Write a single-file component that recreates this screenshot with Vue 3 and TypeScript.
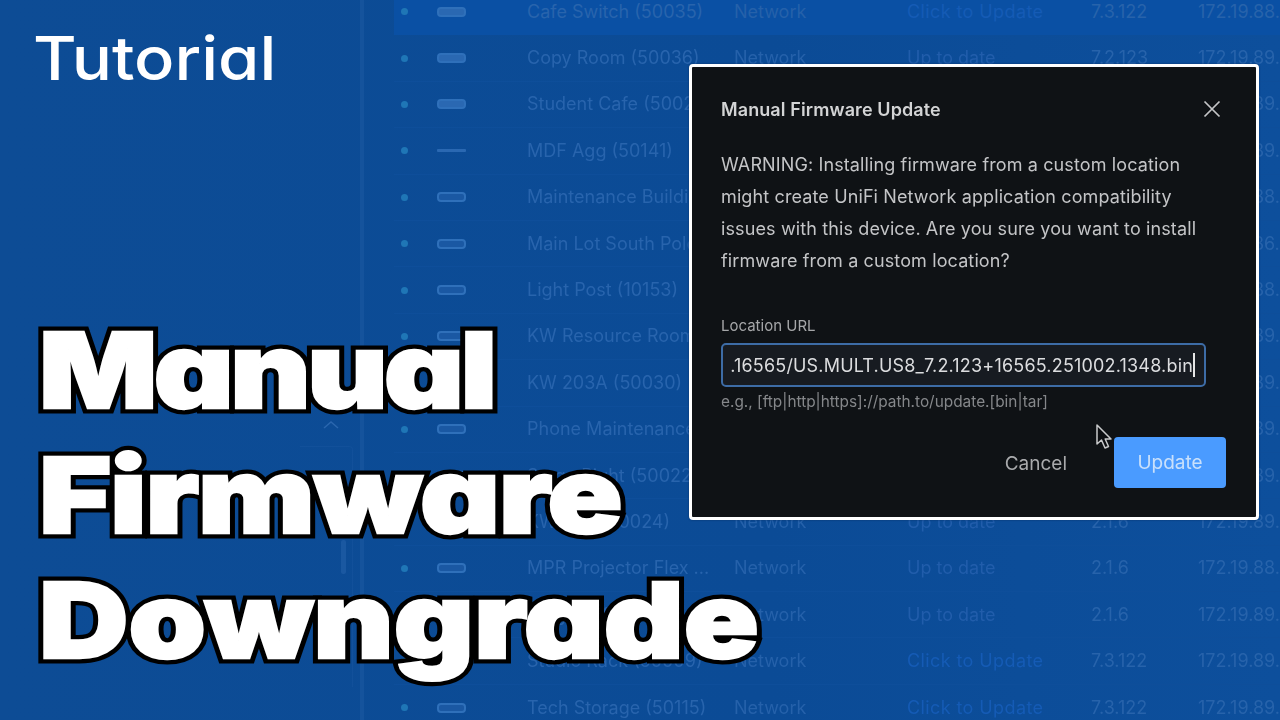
<template>
  <div class="thumb">
    <div class="backdrop">
      <div class="side-rule"></div>
      <div class="side-box"></div>
      <div class="side-bar"></div>
      <svg class="chevron" width="18" height="10" viewBox="0 0 18 10">
        <path d="M2 8 L9 2 L16 8" fill="none" stroke="#2a66ae" stroke-width="1.5" />
      </svg>
      <div class="table">
        <div v-for="(row, i) in rows" :key="i" class="row" :class="{ active: i === 0 }">
          <span class="dot"></span>
          <span class="device" :class="{ thin: row.thin, open: row.open }"></span>
          <span class="name">{{ row.name }}</span>
          <span class="type">Network</span>
          <span class="status" :class="{ link: row.status === 'Click to Update' }">{{ row.status }}</span>
          <span class="ver">{{ row.ver }}</span>
          <span class="ip">{{ row.ip }}</span>
        </div>
      </div>
    </div>

    <div class="overlay">
      <div class="tutorial">Tutorial</div>
      <h1 class="headline">
        <span class="tight" data-t="Manual">Manual</span>
        <span class="snug" data-t="Firmware">Firmware</span>
        <span data-t="Downgrade">Downgrade</span>
      </h1>
    </div>

    <div class="dialog">
      <div class="dialog-head">
        <span class="dialog-title">Manual Firmware Update</span>
        <svg width="20" height="20" viewBox="0 0 20 20">
          <path d="M2.5 2.5 L17.5 17.5 M17.5 2.5 L2.5 17.5" stroke="#c4c5c7" stroke-width="1.7" fill="none" />
        </svg>
      </div>
      <p class="warning">
        WARNING: Installing firmware from a custom location might create UniFi Network application compatibility
        issues with this device. Are you sure you want to install firmware from a custom location?
      </p>
      <label class="field-label">Location URL</label>
      <div class="input">
        <div class="input-clip">
          <span class="input-text">https://fw-download.ubnt.com/data/usw/7.2.123.16565/US.MULT.US8_7.2.123+16565.251002.1348.bin</span>
        </div>
        <span class="caret"></span>
      </div>
      <div class="hint">e.g., [ftp|http|https]://path.to/update.[bin|tar]</div>
      <div class="actions">
        <span class="cancel">Cancel</span>
        <span class="update">Update</span>
      </div>
    </div>

    <svg class="pointer" width="20" height="30" viewBox="0 0 20 30">
      <path d="M2 2 L2 21 L6.5 17 L10 25 L13.5 23.5 L10.2 16 L16 16 Z" fill="#0c0e11" stroke="#c9cacb" stroke-width="1.5" stroke-linejoin="round" />
    </svg>
  </div>
</template>

<script setup lang="ts">
interface Row {
  name: string
  status: string
  ver: string
  ip: string
  thin?: boolean
  open?: boolean
}

const upd = 'Click to Update'
const ok = 'Up to date'

const rows: Row[] = [
  { name: 'Cafe Switch (50035)', status: upd, ver: '7.3.122', ip: '172.19.88.' },
  { name: 'Copy Room (50036)', status: ok, ver: '7.2.123', ip: '172.19.89.' },
  { name: 'Student Cafe (50027)', status: ok, ver: '7.2.123', ip: '172.19.89.' },
  { name: 'MDF Agg (50141)', status: ok, ver: '7.2.123', ip: '172.19.89.', thin: true },
  { name: 'Maintenance Building', status: ok, ver: '7.2.123', ip: '172.19.88.', open: true },
  { name: 'Main Lot South Pole', status: ok, ver: '7.2.123', ip: '172.19.86.7', open: true },
  { name: 'Light Post (10153)', status: ok, ver: '7.2.123', ip: '172.19.88.', open: true },
  { name: 'KW Resource Room', status: ok, ver: '2.1.6', ip: '172.19.89.', open: true },
  { name: 'KW 203A (50030)', status: ok, ver: '2.1.6', ip: '172.19.89.', open: true },
  { name: 'Phone Maintenance', status: ok, ver: '2.1.6', ip: '172.19.89.', open: true },
  { name: 'Stage Right (50022)', status: ok, ver: '2.1.6', ip: '172.19.89.', open: true },
  { name: 'KW 204 (50024)', status: ok, ver: '2.1.6', ip: '172.19.89.', open: true },
  { name: 'MPR Projector Flex ...', status: ok, ver: '2.1.6', ip: '172.19.88.', open: true },
  { name: 'Stage Left (50021)', status: ok, ver: '2.1.6', ip: '172.19.89.', open: true },
  { name: 'Studio Rack (50009)', status: upd, ver: '7.3.122', ip: '172.19.89.', open: true },
  { name: 'Tech Storage (50115)', status: upd, ver: '7.3.122', ip: '172.19.89.', open: true },
]
</script>

<style>
html, body {
  margin: 0;
  background: #0c4b95;
}
</style>

<style scoped>
.thumb {
  position: relative;
  width: 1280px;
  height: 720px;
  overflow: hidden;
  background: linear-gradient(90deg, #0d4c95 0%, #0b4b96 60%, #0d4f9c 100%);
  font-family: Inter, "Liberation Sans", sans-serif;
}

/* faded table behind everything */
.backdrop {
  display: flow-root;
  filter: blur(0.7px);
}
.side-rule {
  position: absolute;
  left: 360px;
  top: 0;
  width: 4px;
  height: 720px;
  background: #15539c;
}
.side-box {
  position: absolute;
  left: 300px;
  top: 446px;
  width: 52px;
  height: 240px;
  border-top: 1px solid #12509a;
  border-right: 1px solid #12509a;
  border-radius: 0 4px 0 0;
}
.side-bar {
  position: absolute;
  left: 341px;
  top: 540px;
  width: 5px;
  height: 34px;
  border-radius: 2px;
  background: #1a58a1;
}
.chevron {
  position: absolute;
  left: 322px;
  top: 420px;
}
.table {
  display: flex;
  flex-direction: column;
  margin-top: -11px;
  margin-left: 394px;
}
.row {
  display: grid;
  grid-template-columns: 43px 90px 207px 173px 184px 107px 1fr;
  align-items: center;
  height: 46.4px;
  box-sizing: border-box;
  border-bottom: 1px solid #0e4e9a;
  font-size: 18px;
  line-height: 24px;
  color: #2864ad;
  white-space: nowrap;
  overflow: hidden;
}
.row.active {
  background: #0a50a4;
  border-bottom-color: transparent;
}
.dot {
  width: 7px;
  height: 7px;
  margin-left: 7px;
  border-radius: 50%;
  background: #1f76b6;
}
.device {
  width: 29px;
  height: 10px;
  box-sizing: border-box;
  border-radius: 4px;
  background: #2a68b2;
  border: 2px solid #2f70ba;
}
.device.open {
  background: #1a58a3;
  border-width: 2.5px;
}
.device.thin {
  height: 3px;
  border: 0;
  border-radius: 1px;
}
.type {
  color: #2561aa;
}
.status {
  color: #215dab;
}
.status.link {
  letter-spacing: 0.4px;
  color: #155bb5;
}
.ver, .ip {
  color: #2763ab;
}

/* title text */
.overlay {
  position: absolute;
  inset: 0;
  display: flex;
  flex-direction: column;
  justify-content: space-between;
  padding: 22px 0 38px 33px;
  box-sizing: border-box;
  font-feature-settings: "cv11";
}
.tutorial {
  font-size: 60px;
  line-height: 72px;
  font-weight: 500;
  color: #fff;
  transform: scaleX(1.115);
  transform-origin: left center;
}
.headline {
  display: flex;
  flex-direction: column;
  align-items: flex-start;
  margin: 0;
  padding-left: 5px;
  font-size: 105px;
  line-height: 125px;
  font-weight: 900;
  color: #fff;
  transform: scaleX(1.18);
  transform-origin: left center;
}
.headline span {
  position: relative;
  -webkit-text-stroke: 11px #000;
}
/* second copy on top, a white stroke fattens the letters */
.headline span::after {
  content: attr(data-t);
  position: absolute;
  left: 0;
  top: 0;
  -webkit-text-stroke: 2.5px #fff;
}
.headline .tight {
  letter-spacing: -3px;
}
.headline .snug {
  letter-spacing: -1px;
}

/* modal */
.dialog {
  position: absolute;
  left: 689px;
  top: 64px;
  width: 570px;
  height: 456px;
  box-sizing: border-box;
  padding: 29px 29px 0;
  border: 3px solid #fff;
  border-radius: 4px;
  background: #0f1215;
  box-shadow: 0 0 2px #0a2f63;
}
.dialog-head {
  display: flex;
  justify-content: space-between;
  align-items: center;
  height: 26px;
  margin-bottom: 27px;
  padding-right: 5px;
}
.dialog-title {
  font-size: 18px;
  font-weight: 600;
  letter-spacing: 0.1px;
  color: #d3d4d5;
}
.warning {
  max-width: 480px;
  margin: 0 0 39px;
  font-size: 18px;
  line-height: 32px;
  letter-spacing: 0.12px;
  color: #c4c5c7;
}
.field-label {
  display: block;
  margin-bottom: 7px;
  font-size: 15px;
  line-height: 20px;
  color: #a6a7a9;
}
.input {
  display: flex;
  align-items: center;
  width: 485px;
  height: 44px;
  box-sizing: border-box;
  padding: 0 12px 0 8px;
  border: 2px solid #3d6ca6;
  border-radius: 5px;
  background: #171b21;
  white-space: nowrap;
}
.input-clip {
  display: flex;
  flex: 1;
  justify-content: flex-end;
  min-width: 0;
  overflow: hidden;
}
.input-text {
  flex: none;
  font-size: 18px;
  letter-spacing: 0.18px;
  color: #dcdddf;
}
.caret {
  flex: none;
  width: 2px;
  height: 24px;
  margin-right: -3px;
  background: #e6e6e6;
}
.hint {
  margin-top: 5px;
  font-size: 15.4px;
  line-height: 20px;
  color: #85878a;
}
.actions {
  display: flex;
  justify-content: flex-end;
  align-items: center;
  gap: 47px;
  margin-top: 25px;
  margin-right: 1px;
}
.cancel {
  padding-top: 1px;
  font-size: 19px;
  color: #a9aaac;
}
.update {
  display: flex;
  align-items: center;
  justify-content: center;
  width: 112px;
  height: 51px;
  border-radius: 4px;
  background: #4a9bff;
  font-size: 19px;
  color: #c9e0fb;
}
.pointer {
  position: absolute;
  left: 1095px;
  top: 423px;
}
</style>
